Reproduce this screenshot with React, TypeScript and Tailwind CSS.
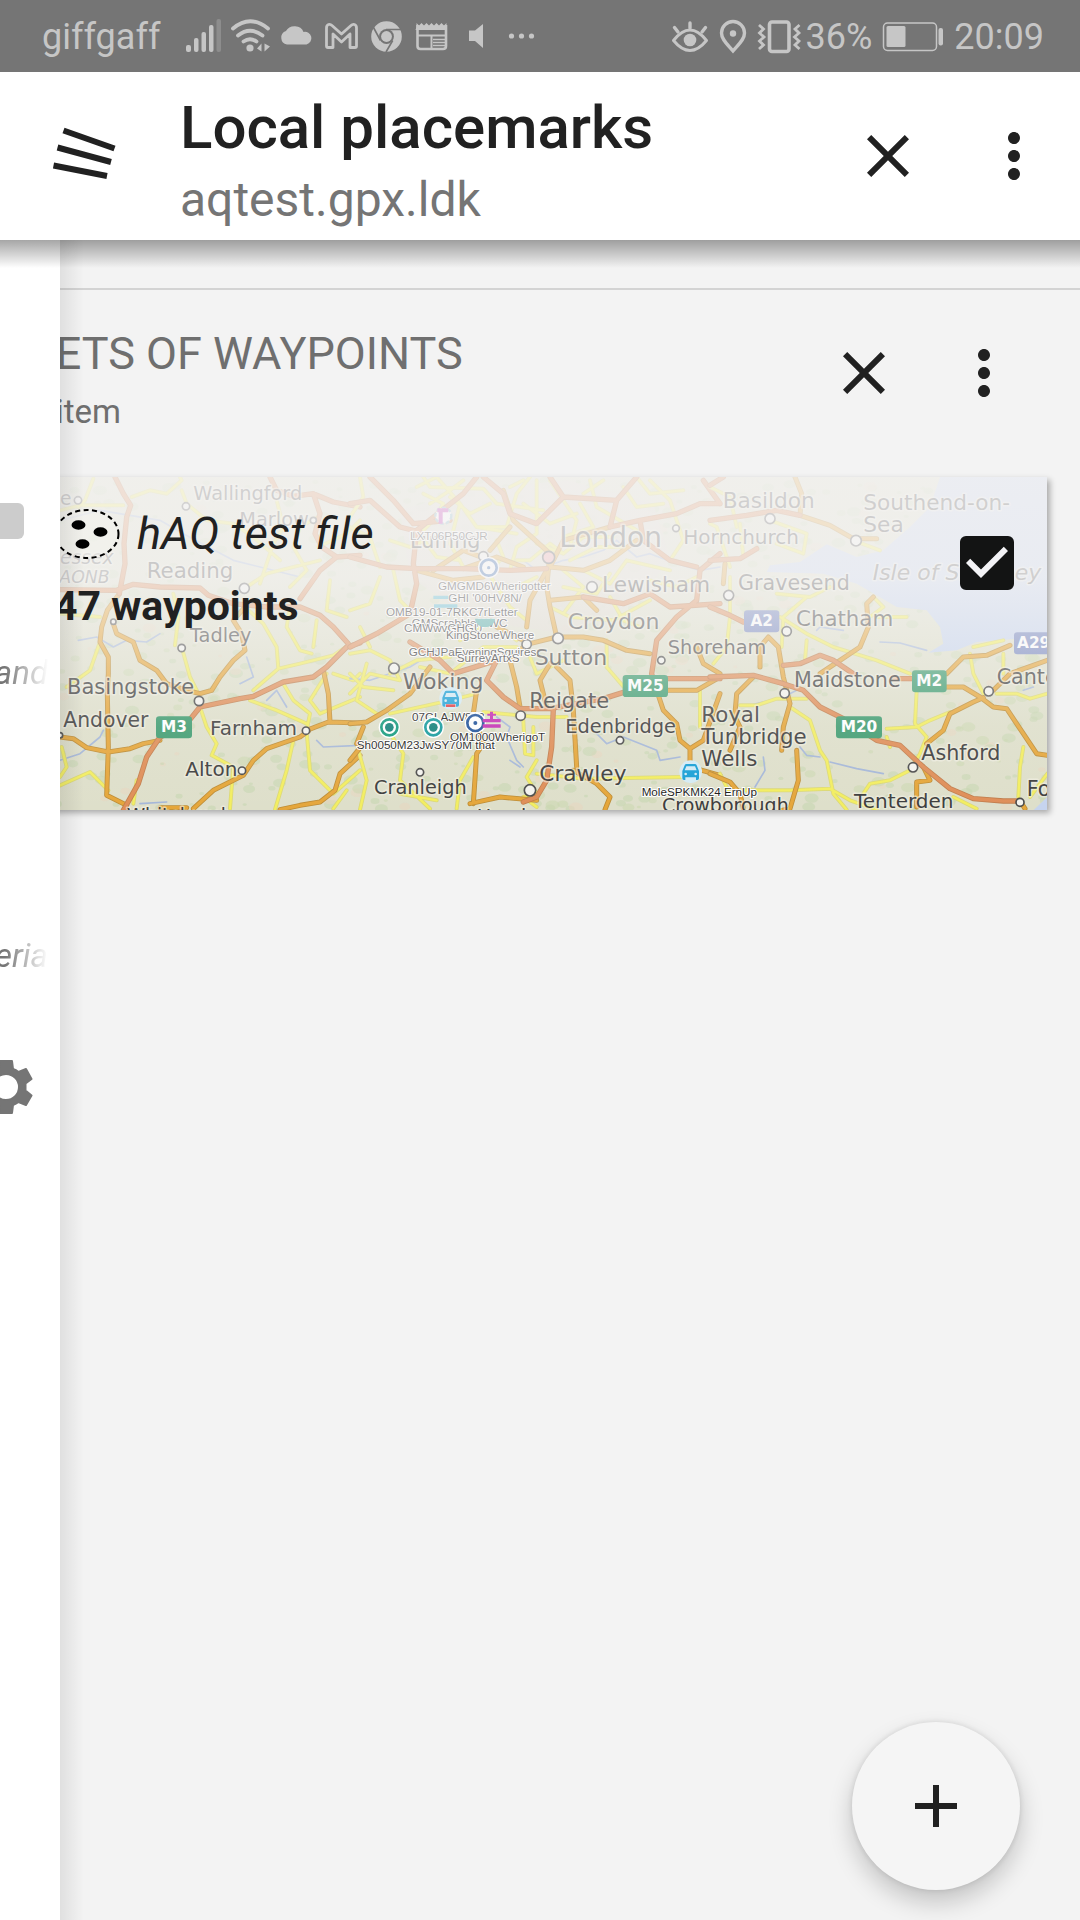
import React, { useState } from 'react';

const CloseIcon = () => (
  <svg className="h-18 w-18" viewBox="0 0 24 24" fill="currentColor">
    <path d="M19 6.41L17.59 5 12 10.59 6.41 5 5 6.41 10.59 12 5 17.59 6.41 19 12 13.41 17.59 19 19 17.59 13.41 12z" />
  </svg>
);

const MoreIcon = () => (
  <svg className="h-18 w-18" viewBox="0 0 24 24" fill="currentColor">
    <path d="M12 8c1.1 0 2-.9 2-2s-.9-2-2-2-2 .9-2 2 .9 2 2 2zm0 2c-1.1 0-2 .9-2 2s.9 2 2 2 2-.9 2-2-.9-2-2-2zm0 6c-1.1 0-2 .9-2 2s.9 2 2 2 2-.9 2-2-.9-2-2-2z" />
  </svg>
);

const StatusBar = () => (
  <div className="flex h-18 items-center justify-between bg-[#757575] pl-[42px] pr-9 text-4xl text-[#c6c6c6]">
    <div className="flex items-center">
      <span className="mr-6 pt-0.5">giffgaff</span>
      {/* signal */}
      <svg className="h-9 w-[45px]" viewBox="185 18 45 36" fill="currentColor">
        <rect x="187" y="45" width="5" height="7" rx="2" />
        <rect x="195" y="38" width="4.5" height="14" rx="2" />
        <rect x="202.5" y="32" width="4.5" height="20" rx="2" />
        <rect x="210" y="25" width="4.5" height="27" rx="2" />
        <rect x="217.5" y="19" width="4.5" height="33" rx="2" opacity="0.3" />
      </svg>
      {/* wifi */}
      <svg className="h-9 w-[45px]" viewBox="230 18 45 36" fill="none" stroke="currentColor" strokeWidth="3.8" strokeLinecap="round">
        <path d="M234 28.5Q251 14 269 28.5M239 35.500Q251 26 263.500 35.500M244.500 41.500Q251 37 257.500 41.500" />
        <circle cx="251" cy="48" r="3.6" fill="currentColor" stroke="none" />
        <path d="M262.500 43.500V51.500L258 48.500ZM265.500 43.500V51.500L271 46.500Z" fill="currentColor" stroke="none" />
      </svg>
      {/* cloud */}
      <svg className="h-9 w-[45px]" viewBox="275 18 45 36" fill="currentColor">
        <path d="M288 44.500a7 7 0 0 1-1-13.500a9.500 8.500 0 0 1 17.500 1a6.200 6.200 0 0 1 3 12.500z" />
      </svg>
      {/* mail */}
      <svg className="h-9 w-[45px]" viewBox="320 18 45 36" fill="none" stroke="currentColor" strokeWidth="2.8" strokeLinejoin="round">
        <path d="M327.500 28c0-4 3.500-4.500 5.500-2.500l9.500 8.500 9.500-8.500c2-2 5.500-1.500 5.500 2.500v18q0 1.500-1.500 1.500h-5V34l-8.500 8-8.500-8v13.500h-5q-1.500 0-1.500-1.500z" />
      </svg>
      {/* browser */}
      <svg className="h-9 w-[45px]" viewBox="365 18 45 36">
        <circle cx="387.500" cy="36.500" r="15.300" fill="currentColor" />
        <circle cx="387.500" cy="36.500" r="7.400" fill="#757575" />
        <circle cx="387.500" cy="36.500" r="5.400" fill="currentColor" />
        <path d="M387 29.500h15M381.500 40.500L374.500 27.500M393.700 40.500L387 52" stroke="#757575" strokeWidth="1.600" />
      </svg>
      {/* news */}
      <svg className="h-9 w-[45px]" viewBox="410 18 45 36" fill="none" stroke="currentColor">
        <path d="M418.500 25V46q0 3 3 3H444q3 0 3-3V25" strokeWidth="2.600" />
        <path d="M417.500 27V23l2.500 2.500 2.500-2.500 2.500 2.500 2.500-2.500 2.500 2.500 2.500-2.500 2.500 2.500 2.500-2.500 2.500 2.500 2.500-2.500 2.500 2.500 2.500-2.500v7h-31z" fill="currentColor" stroke="none" />
        <path d="M418 35.500H447M432.500 35V49" strokeWidth="2" />
        <path d="M434 39.500H446M434 42.500H446M434 45.500H446" strokeWidth="1.400" />
      </svg>
      {/* muted speaker */}
      <svg className="h-9 w-[45px]" viewBox="455 18 45 36" fill="currentColor">
        <path d="M470 30.500h6l8-6.500v24l-8-7h-6z" />
      </svg>
      <svg className="h-9 w-[45px]" viewBox="500 18 45 36" fill="currentColor">
        <circle cx="512.500" cy="36" r="2.600" />
        <circle cx="522.500" cy="36" r="2.600" />
        <circle cx="532.500" cy="36" r="2.600" />
      </svg>
    </div>
    <div className="flex items-center">
      <svg className="h-9 w-12" viewBox="668 18 48 36" fill="none" stroke="currentColor" strokeWidth="3.400" strokeLinecap="round">
        <path d="M675.500 40.500Q692 19.500 708.500 40.500Q692 60.500 675.500 40.500Z" strokeWidth="3" strokeLinejoin="round" />
        <path d="M692 23V28M676.500 27.500L680 32M707.500 27.500L704 32" />
        <circle cx="692" cy="40" r="6.300" fill="currentColor" stroke="none" />
      </svg>
      <svg className="h-9 w-[38px]" viewBox="716 18 38 36" fill="none" stroke="currentColor" strokeWidth="3.400">
        <path d="M735 51C729 44 723.500 39.500 723.500 33a11.500 11.500 0 0 1 23 0C746.500 39.500 741 44 735 51Z" />
        <circle cx="735" cy="33.500" r="3.200" fill="currentColor" stroke="none" />
      </svg>
      <svg className="h-9 w-[54px]" viewBox="754 18 54 36" fill="none" stroke="currentColor">
        <rect x="771.500" y="22" width="19.500" height="29.500" rx="2.500" strokeWidth="3.600" />
        <path d="M761 25l4.500 4-4 4 4.500 4-4.500 4 4 4-4.500 4M801.500 25l-4.500 4 4 4-4.500 4 4.500 4-4 4 4.500 4" strokeWidth="2.800" />
      </svg>
      <span className="pt-0.5">36%</span>
      <svg className="mx-2 h-9 w-[66px]" viewBox="881 18 66 36">
        <rect x="884.500" y="23" width="53" height="27.500" rx="4" fill="none" stroke="currentColor" strokeWidth="1.500" />
        <rect x="887.500" y="26" width="19" height="21" rx="1.500" fill="currentColor" />
        <rect x="939.500" y="28" width="4.500" height="17.500" rx="2" fill="currentColor" />
      </svg>
      <span className="pt-0.5">20:09</span>
    </div>
  </div>
);

const Header = () => (
  <header className="relative z-20 flex h-[168px] items-start bg-white text-[#212121]">
    <button type="button" aria-label="Menu" className="ml-12 mt-12 h-18 w-18">
      <svg className="h-18 w-18" viewBox="48 120 72 72" fill="none" stroke="currentColor" strokeWidth="6">
        <path d="M63.500 130.500L114.500 148.500M57.500 147.500L111 162M53.500 165.500L107 176" />
      </svg>
    </button>
    <div className="ml-15 mt-5 min-w-0 flex-1">
      <h1 className="text-6xl font-medium leading-[72px]">Local placemarks</h1>
      <p className="text-5xl leading-[72px] text-[#757575]">aqtest.gpx.ldk</p>
    </div>
    <button type="button" aria-label="Close" className="mr-[54px] mt-12 h-18 w-18"><CloseIcon /></button>
    <button type="button" aria-label="More options" className="mr-[30px] mt-12 h-18 w-18"><MoreIcon /></button>
    <div className="absolute inset-x-0 top-full h-7 bg-linear-to-b from-black/35 to-transparent" />
  </header>
);

const GearIcon = () => (
  <svg className="h-[54px] w-[54px]" viewBox="-21 1060 54 54" fill="#757575">
    <path
      fillRule="evenodd"
      stroke="#757575"
      strokeWidth="2"
      strokeLinejoin="round"
      d="M0 1061H12L13 1069Q16 1070 18.500 1072L26 1069L31.500 1079L25.500 1083.500V1090.500L31.500 1095.500L26 1105L18.500 1102Q16 1104 13 1105L12 1113H0L-1 1105Q-4 1104 -6.500 1102L-14 1105L-19.500 1095.500L-13.500 1090.500V1083.500L-19.500 1079L-14 1069L-6.500 1072Q-4 1070 -1 1069ZM6 1074a13 13 0 1 0 0 26a13 13 0 1 0 0-26Z"
    />
  </svg>
);

const Drawer = () => (
  <aside className="absolute inset-y-0 left-0 z-10 w-15 bg-white text-[33px] italic leading-10 text-[#757575]">
    <div className="flex h-full flex-col overflow-hidden pt-[263px]">
      <div className="h-9 w-6 rounded-r-md bg-[#cccccc]" />
      <div className="mt-[114px] flex w-12 justify-end overflow-hidden mask-r-from-10% mask-r-to-100%">
        <span>and</span>
      </div>
      <div className="mt-[243px] flex w-12 justify-end overflow-hidden mask-r-from-10% mask-r-to-100%">
        <span>eria</span>
      </div>
      <button type="button" aria-label="Settings" className="-ml-[21px] mt-[84px] w-[54px]"><GearIcon /></button>
    </div>
    <div className="absolute inset-y-0 left-full w-6 bg-linear-to-r from-black/8 to-transparent" />
  </aside>
);

type Tile = {
  x: number;
  motorways: string[];
  primary: string[];
  secondary: string[];
  rivers: string[];
};

const tiles: Tile[] = [
  {
    x: 0,
    motorways: [
      'M180 388L350 390L400 372L480 380L600 383L625 405L700 430L800 440L900 440L960 465L1000 500L1045 550',
      'M370 1050L415 970L440 890L480 830L560 790L600 740L720 715L760 708L850 665L940 650L980 620L1040 560L1080 548',
      'M810 50L830 90L880 108L940 100L1000 125L1080 140',
      'M900 415L960 330L1010 290L1080 285M940 100L960 160L945 220L965 260L1010 290',
      'M345 50L370 100L392 135L380 170L372 250L375 310L358 400',
    ],
    primary: [
      'M358 400L322 450L305 500L300 545L325 590L325 640L322 700L325 860L320 1005L380 1035',
      'M180 830L220 835L260 862L325 875L390 865L430 850L480 840',
      'M340 490L350 520L400 545L420 600L470 630L500 670L560 690L600 700',
      'M600 700L635 690L660 650L700 600L735 570L725 520L700 480L735 440',
      'M970 630L985 700L990 785M920 810L985 785L1080 788',
      'M580 1045L640 990L730 945L760 900L800 865L900 830L925 812',
      'M840 1048L900 1035L960 1025L1005 990L1020 940L1080 885',
      'M480 1042L560 1042',
    ],
    secondary: [
      'M280 55L255 120L235 140M180 150L240 135L370 135',
      'M395 110L450 90L500 100L545 60L540 50M545 90L560 130L620 180L700 190L760 230L840 300',
      'M520 400L535 470L525 555M545 560L570 650L595 700',
      'M300 545L270 630L200 680M185 860L200 920L180 950M180 975L270 935L325 990',
      'M400 1030L410 960M600 740L620 800L650 850L635 885L700 920L690 1045',
      'M735 440L790 490L830 560L835 625L760 690M835 625L900 610L1000 585L1045 555',
      'M850 670L880 720L930 760L920 810M750 720L830 750L920 790M980 640L930 720L960 760L1080 710',
      'M880 840L860 930L825 1048M920 815L930 930L1000 1000L1080 930M1000 1045L1040 990',
      'M990 360L980 450L1040 470M870 440L860 500L900 570L935 580M950 480L940 560',
      'M955 170L900 200L880 260L920 330L870 380M955 260L1040 220L1080 180',
      'M180 460L300 470M740 380L800 340L960 300',
      'M830 120L850 200L820 250L780 370M1000 640L1060 660L1080 640',
    ],
    rivers: [
      'M235 540L290 530L340 560L380 540L440 545L480 520M180 900L240 880L300 830L310 810',
      'M740 590L760 650L720 670M950 840L970 860L1080 855M800 720L830 690L860 740',
      'M180 180L300 150L480 180L550 220L700 300L900 350M420 1030L500 1025',
    ],
  },
  {
    x: 1050,
    motorways: [
      'M0 130L60 120L150 200L210 215M60 50L130 120L190 190L300 180',
      'M0 290L110 320L200 325L340 325L480 330L590 325',
      'M0 560L80 520L180 460L200 370L190 310L200 210L340 100L380 50',
      'M400 50L460 100L480 160L560 190L640 110L800 120L860 50M640 110L600 50',
      'M1110 130L1060 60M800 120L780 200L870 180L980 160L1050 130L1110 130',
      'M1110 280L1050 330L1040 420L980 470L920 540L905 640L920 700',
      'M180 545L270 600L310 640L440 600L410 660L460 710L510 745L600 745L760 715L840 690L950 655L1110 655',
      'M610 745L605 860L590 960L560 1010L520 1025',
      'M870 180L880 240L960 300L1040 320M700 410L820 430L900 400L960 440L1110 430',
    ],
    primary: [
      'M0 790L50 785L110 750L180 700L240 620M20 850L40 800',
      'M370 1030L380 880L400 850L370 760L380 690',
      'M460 90L490 180L600 280L590 380L600 440L620 530L540 550L440 500',
      'M600 320L700 330L780 300L860 240M600 320L640 240L780 200M590 330L540 420L530 500',
      'M620 530L700 530L760 540L830 570L900 580M600 420L700 410L740 450',
      'M530 550L480 600L500 680L510 740M600 610L570 660L590 740M620 620L660 660L670 750L680 920',
      'M360 1030L450 1010L560 1020M670 930L740 970L780 1010L765 1048',
      'M920 690L940 750L980 790L990 840L1020 865L1060 840L1110 700M1020 865L1020 920L1110 945',
      'M950 690L1040 690L1110 650M0 900L40 850M1040 560L1060 610L1110 640',
      'M340 325L440 290L520 320M250 330L340 270L420 300M480 200L420 270M200 330L310 360L400 350',
    ],
    secondary: [
      'M200 80L260 50L330 130L380 200L470 200L500 100L540 50M220 100L280 130L250 180L200 230',
      'M0 580L60 570L120 600L150 660L60 640L0 700M0 640L40 680L130 690',
      'M50 610L20 720L80 760M60 560L30 500M0 450L60 430L90 350M90 320L60 230L0 200',
      'M130 330L150 420L180 450M330 130L300 250L340 320M410 330L480 440L530 480',
      'M480 330L500 260L560 220L560 60M560 250L640 280L700 230L790 230M640 330L700 380L640 460',
      'M690 130L730 200L640 230M600 440L660 470L790 480L900 420M770 540L770 620L830 690',
      'M700 330L780 370L830 300L960 330M870 500L820 480L780 410M540 590L560 640L640 600',
      'M120 760L300 720L380 700M400 755L560 770L650 770M520 780L525 880L550 885L550 800',
      'M120 820L160 880L150 960L240 1045M370 890L330 960L320 1045M20 850L50 960L30 1048',
      'M560 900L530 950L560 1000L520 1010L560 1040M560 940L700 955L1000 950',
      'M1050 690L1050 800M860 50L900 100L1000 90M900 60L960 120L1000 240L960 300',
      'M220 50L240 80L400 85L440 130L580 150M380 200L500 220M200 210L260 290L330 300',
      'M210 620L300 640L400 560L500 560M120 640L200 600L300 590M330 540L420 480L500 540',
      'M600 60L680 180L660 260M720 60L740 140L860 210M640 280L600 250L540 300L500 300',
      'M150 1000L260 1020M900 360L980 380L1040 350',
      'M30 50L40 110L0 170M250 230L180 260L120 240M420 130L360 160L300 110M520 130L600 190L680 160',
      'M440 240L460 290L420 330M660 300L740 260L820 260M560 350L500 380L440 370M640 380L740 400L780 340',
      'M760 60L700 100M820 80L860 140L940 130M520 60L480 80M340 60L300 90L240 130',
    ],
    rivers: [
      'M440 770L480 800L470 830L500 900L520 920M720 800L770 850L820 830L920 870L930 900L990 890',
      'M0 655L60 660L180 620L260 570M800 240L860 290L900 280L980 310L1050 330L1110 320',
      'M520 300L560 330L640 300L700 290L760 270L800 240M480 900L510 920',
    ],
  },
  {
    x: 2130,
    motorways: [
      'M0 440L60 465L100 485M0 650L130 645L220 670L280 690L330 740L400 775L500 840L570 855L640 920L720 985L790 1015L880 1022L930 1022',
      'M220 615L270 610L330 585L370 600L430 640M550 655L610 655',
      'M0 180L110 165L200 150L270 165M0 75L40 50M0 300L90 295L140 265',
    ],
    primary: [
      'M255 50L275 100L270 165L360 195L430 235L500 235',
      'M150 620L150 560L175 530L205 560L220 650L240 730L220 800L215 870',
      'M330 640L390 600L450 560L475 500L470 430L490 410',
      'M700 680L760 680L810 710L850 740L890 745L940 820L980 880L1012 885',
      'M710 640L760 590L830 585L900 555M850 690L900 640L1012 600',
      'M650 850L700 810L720 760L790 725L820 712M620 1040L620 965L660 960L640 920',
      'M0 940L60 965L90 1000L100 1045M260 870L265 960L240 1045L215 1050M130 650L80 700L75 760',
      'M930 1022L945 1045M60 870L90 800L70 760M40 370L45 310',
    ],
    secondary: [
      'M60 350L60 470L50 560L10 610M210 470L290 520L370 560L500 600L600 640M215 560L220 470L290 410',
      'M620 690L615 790L650 830L630 880L600 930L540 960L480 970L460 1000',
      'M530 805L620 800L660 780L720 755M530 830L540 860M240 740L300 780L330 870L350 900L370 1000L410 1048',
      'M90 735L140 735L200 715L290 715M90 990L240 990L360 985L420 1020L500 1048',
      'M780 580L790 640L820 700M790 560L880 540M880 580L880 640M860 700L920 700L960 715L1012 700',
      'M940 860L930 920L925 1010M730 1010L800 1045M290 540L285 600M500 470L590 470M490 410L520 440L480 470',
      'M200 250L280 280L290 220L180 180M430 240L510 270M0 80L60 110L80 200M60 320L20 200L0 190',
      'M90 190L100 290M200 400L300 410L360 380M960 1010L1012 940M30 940L60 1000',
    ],
    rivers: [
      'M270 860L290 885L330 890M360 905L440 925L520 940M510 545L570 548L650 570M135 980L165 930L160 890',
      'M320 510L330 500L400 510M120 735L220 710L260 690M940 690L970 680',
    ],
  },
];

const Road = ({ d, tone }: { d: string[]; tone: string }) => {
  const path = d.join('');
  const styles: Record<string, [string, string, number]> = {
    motorway: ['#c17d4c', '#df8e58', 13],
    primary: ['#bd8c35', '#e5a63a', 12],
    secondary: ['#dbd876', '#f3ee60', 9],
  };
  const [casing, fill, width] = styles[tone];
  return (
    <>
      <path d={path} stroke={casing} strokeWidth={width + 3} />
      <path d={path} stroke={fill} strokeWidth={width - 2} />
    </>
  );
};

// [text, x, baseline, size, italic]
const places: [string, number, number, number, boolean?][] = [
  ['e', 180, 134, 56],
  ['Wallingford', 580, 120, 58],
  ['Marlow', 718, 197, 58],
  ['Reading', 440, 354, 64],
  ['essex', 180, 310, 56, true],
  ['AONB', 178, 368, 52, true],
  ['Tadley', 570, 546, 58],
  ['Basingstoke', 201, 702, 63],
  ['Andover', 190, 800, 61],
  ['Farnham', 630, 824, 60],
  ['Alton', 556, 946, 60],
  ['Whitchurch', 380, 1085, 56],
  ['Luffing', 1230, 262, 62],
  ['London', 1678, 260, 84],
  ['Hornchurch', 2050, 252, 60],
  ['Lewisham', 1806, 394, 65],
  ['Croydon', 1703, 507, 66],
  ['Sutton', 1604, 614, 66],
  ['Woking', 1208, 686, 66],
  ['Reigate', 1588, 743, 63],
  ['Shoreham', 2003, 582, 58],
  ['Edenbridge', 1696, 818, 58],
  ['Crawley', 1618, 962, 65],
  ['Cranleigh', 1122, 1000, 58],
  ['Horsham', 1430, 1088, 58],
  ['Basildon', 2168, 144, 65],
  ['Southend-on-', 2590, 148, 65],
  ['Sea', 2590, 214, 65],
  ['Gravesend', 2214, 388, 62],
  ['Isle of Sheppey', 2618, 358, 66, true],
  ['Chatham', 2388, 496, 64],
  ['Maidstone', 2382, 680, 62],
  ['Canterbury', 2990, 672, 62],
  ['Royal', 2104, 784, 64],
  ['Tunbridge', 2104, 850, 64],
  ['Wells', 2104, 916, 64],
  ['Ashford', 2764, 900, 62],
  ['Tenterden', 2562, 1043, 60],
  ['Folkestone', 3080, 1007, 62],
  ['Crowborough', 1986, 1056, 57],
];

const towns = [
  [234, 120, 11], [558, 138, 11], [733, 384, 15], [340, 484, 8], [545, 563, 11], [597, 722, 14], [180, 825, 8],
  [918, 811, 11], [726, 931, 11], [940, 180, 9], [1182, 624, 16], [1450, 288, 14], [1580, 552, 14], [1674, 534, 16],
  [1776, 380, 16], [2028, 204, 10], [1562, 766, 14], [1860, 840, 11], [1260, 936, 11], [1590, 990, 17], [1984, 600, 11],
  [2310, 175, 15], [2568, 241, 16], [2186, 405, 15], [2360, 513, 14], [2354, 699, 14], [2966, 693, 14], [2739, 921, 14],
  [3060, 1026, 12],
];

const shields: [string, number, number, number, string][] = [
  ['M3', 468, 768, 108, '#3f9c70'],
  ['M25', 1868, 644, 136, '#3f9c70'],
  ['M2', 2736, 630, 104, '#3f9c70'],
  ['M20', 2508, 768, 138, '#3f9c70'],
  ['A2', 2232, 450, 106, '#7283bd'],
  ['A299', 3042, 516, 150, '#7283bd'],
];

const waypoints: [string, number, number][] = [
  ['LXT06P50CJR', 1230, 238],
  ['GMGMD6Wherigotter', 1314, 389],
  ["GHI '00HV8N/", 1345, 426],
  ['OMB19-01-7RKC7rLetter', 1158, 466],
  ['GMScrabble/CWC', 1235, 499],
  ['CMWwvGHGU', 1212, 515],
  ['KingStoneWhere', 1338, 537],
  ['GCHJPaEveningSquires', 1226, 587],
  ['SurreyArtxS', 1370, 606],
  ['07GLAJW878', 1236, 783],
  ['Sh0050M23JwSY70M that', 1070, 867],
  ['OM1000WherigoT', 1350, 843],
  ['MoleSPKMK24 ErnUp', 1925, 1006],
];

const blobs = Array.from({ length: 900 }, (_, i) => {
  const n = Math.abs(Math.sin(i * 12.9898) * 43758.5453) % 1;
  const m = Math.abs(Math.sin(i * 78.233 + 4) * 24634.6345) % 1;
  return {
    x: 100 + n * 3040,
    y: 60 + m * 985,
    r: 4 + ((i * 37) % 11),
    fill: i % 7 === 0 ? '#e8d6c0' : i % 3 === 0 ? '#cbd7ae' : '#c4d6ae',
  };
});

const Target = ({ x, y, color, core, dot }: { x: number; y: number; color: string; core: string; dot: number }) => (
  <g>
    <circle cx={x} cy={y} r="32" fill="#fff" />
    <circle cx={x} cy={y} r="24" fill="none" stroke={color} strokeWidth="8" />
    <circle cx={x} cy={y} r={dot} fill={core} />
  </g>
);

const CarPin = ({ x, y }: { x: number; y: number }) => (
  <g>
    <circle cx={x} cy={y} r="34" fill="#d3ebf5" />
    <path
      transform={`translate(${x - 26} ${y - 26})`}
      fill="#189fd6"
      d="M8 7Q9 3 14 3H38Q43 3 44 7L51 24V46Q51 51 46 51H42V43H10V51H6Q1 51 1 46V24ZM13 10L8 22H44L39 10ZM11 29a4 4 0 1 0 0 8a4 4 0 1 0 0-8ZM41 29a4 4 0 1 0 0 8a4 4 0 1 0 0-8Z"
      fillRule="evenodd"
    />
  </g>
);

const MapPreview = () => (
  <svg
    className="block h-[333px] w-full"
    viewBox="99 50 3042 1000"
    preserveAspectRatio="xMaxYMin slice"
    fontFamily="'DejaVu Sans', sans-serif"
    aria-hidden="true"
  >
    <defs>
      <linearGradient id="veil" x1="0" y1="0" x2="0" y2="1">
        <stop offset="0" stopColor="#f4f3f3" stopOpacity="0.82" />
        <stop offset="0.3" stopColor="#f4f3f3" stopOpacity="0.76" />
        <stop offset="0.5" stopColor="#f4f3f3" stopOpacity="0.5" />
        <stop offset="0.75" stopColor="#f4f3f3" stopOpacity="0.14" />
        <stop offset="1" stopColor="#f4f3f3" stopOpacity="0" />
      </linearGradient>
    </defs>
    <rect x="99" y="50" width="3042" height="1000" fill="#dedfca" />
    {blobs.map((b, i) => (
      <ellipse key={i} cx={b.x} cy={b.y} rx={b.r * 1.5} ry={b.r} fill={b.fill} opacity="0.55" />
    ))}
    <path d="M1200 150L1400 90L1700 60L1960 130L2010 300L1900 430L1700 520L1420 480L1230 350Z" fill="#dfd9cf" opacity="0.7" />
    <g fill="#c6d4ee">
      <path d="M2820 50H3142V545L3050 535L2930 545L2870 570L2785 577L2830 550L2820 500L2780 450L2690 440L2630 405L2570 370L2470 340L2300 335L2310 315L2400 305L2480 252L2570 290L2650 270L2730 200L2790 140Z" />
      <path d="M3142 1010L3100 1050H3142Z" />
    </g>
    <g fill="none" strokeLinejoin="round" strokeLinecap="round">
      {tiles.map((t) => (
        <g key={t.x} transform={`translate(${t.x} 0)`}>
          <path d={t.rivers.join('')} stroke="#a5b7d8" strokeWidth="5" />
          <Road d={t.secondary} tone="secondary" />
          <Road d={t.primary} tone="primary" />
          <Road d={t.motorways} tone="motorway" />
        </g>
      ))}
    </g>
    {towns.map(([x, y, r]) => (
      <circle key={`${x}-${y}`} cx={x} cy={y} r={r} fill="#f3f3ee" stroke="#4b4b4b" strokeWidth="5" />
    ))}
    <circle cx="1646" cy="291" r="18" fill="#f0a5aa" stroke="#4b4b4b" strokeWidth="5" />
    {places.map(([text, x, y, size, italic]) => (
      <text
        key={text + x}
        x={x}
        y={y}
        fontSize={size}
        fontStyle={italic ? 'italic' : 'normal'}
        fill={italic ? '#5f5f5f' : '#3d3d3d'}
        stroke="#f3f1e6"
        strokeOpacity="0.6"
        strokeWidth="9"
        strokeLinejoin="round"
        paintOrder="stroke"
      >
        {text}
      </text>
    ))}
    {shields.map(([text, x, y, w, color]) => (
      <g key={text}>
        <rect x={x} y={y} width={w} height="66" rx="10" fill={color} />
        <text x={x + w / 2} y={y + 48} fontSize="46" fontWeight="bold" textAnchor="middle" fill="#fff">
          {text}
        </text>
      </g>
    ))}
    <g fontFamily="'Liberation Sans', sans-serif" fontSize="35" fill="#1c1c1c" stroke="#fff" strokeWidth="6" paintOrder="stroke">
      {waypoints.map(([text, x, y]) => (
        <text key={text} x={x} y={y}>{text}</text>
      ))}
    </g>
    <circle cx="1330" cy="166" r="24" fill="#fff" stroke="#86b9c9" strokeWidth="7" strokeDasharray="12 6" />
    <path d="M1322 190V146M1312 150H1345" stroke="#c42bb3" strokeWidth="12" />
    <Target x={1466} y={322} color="#1e57a8" core="#1e57a8" dot={5} />
    <Target x={1426} y={788} color="#1d4f98" core="#1d4f98" dot={6} />
    <Target x={1168} y={801} color="#129a7c" core="#0f7f77" dot={13} />
    <Target x={1300} y={801} color="#129a9c" core="#0f7f77" dot={13} />
    <path d="M1300 406h45v10h-45zM1302 432h70v10h-70z" fill="#56b8cf" />
    <path d="M1425 475h60a30 26 0 0 1-60 0z" fill="#4ba9a4" />
    <CarPin x={1352} y={714} />
    <path d="M1338 732h28v8h-28z" fill="#e0393e" />
    <CarPin x={2072} y={934} />
    <path d="M1448 776h54v10h-54zM1448 792h54v10h-54zM1470 754h9v24h-9zM1462 760h26v6h-26z" fill="#c42bb3" />
    <rect x="99" y="50" width="3042" height="1000" fill="url(#veil)" />
  </svg>
);

const WaypointCard = () => {
  const [checked, setChecked] = useState(true);

  return (
    <article className="relative shadow-[3px_3px_6px_rgba(0,0,0,0.3)]">
      <MapPreview />
      <div className="absolute inset-0 flex items-start justify-between pl-[18px] pr-[33px] text-[#212121]">
        <div className="pt-7">
          <div className="flex items-center">
            <svg className="mr-[14px] h-[58px] w-18" viewBox="52 503 72 58">
              <ellipse cx="88" cy="532" rx="31.500" ry="24" fill="#f5f5f0" fillOpacity="0.4" stroke="#000" strokeWidth="2" strokeDasharray="5 3.500" />
              <ellipse cx="79.500" cy="523" rx="7" ry="4.700" />
              <ellipse cx="101.500" cy="530" rx="7" ry="4.700" />
              <ellipse cx="83.500" cy="542" rx="7" ry="4.700" />
            </svg>
            <h3 className="text-[45px] italic leading-[58px]">hAQ test file</h3>
          </div>
          <p className="mt-[19px] pl-[3px] text-[41px] font-bold leading-[48px]">47 waypoints</p>
        </div>
        <label className="relative mt-[59px] h-[54px] w-[54px]">
          <input
            type="checkbox"
            aria-label="Show hAQ test file"
            checked={checked}
            onChange={(e) => setChecked(e.target.checked)}
            className="block h-[54px] w-[54px] appearance-none rounded-md border-6 border-[#131414] checked:bg-[#131414]"
          />
          {checked && (
            <svg className="pointer-events-none absolute inset-0 h-[54px] w-[54px]" viewBox="3 3 18 18" fill="#f3f3f6">
              <path d="M10 17l-5-5 1.410-1.410L10 14.170l7.590-7.590L19 8l-9 9z" />
            </svg>
          )}
        </label>
      </div>
    </article>
  );
};

const App: React.FC = () => {
  return (
    <div className="flex min-h-screen flex-col bg-[#f3f3f3] font-['Roboto',sans-serif]">
      <StatusBar />
      <Header />
      <div className="relative flex-1">
        <Drawer />
        <main className="pt-12">
          <section className="border-t-2 border-[#d3d3d3] px-[33px]">
            <div className="-ml-1 flex items-start justify-between pr-[27px] pt-[37px] text-[#6f6f6f]">
              <div>
                <h2 className="text-[45px] leading-[54px]">SETS OF WAYPOINTS</h2>
                <p className="mt-[9px] text-[33px] leading-[44px]">1 item</p>
              </div>
              <div className="mt-[10px] flex gap-12 text-[#212121]">
                <button type="button" aria-label="Remove set" className="h-18 w-18"><CloseIcon /></button>
                <button type="button" aria-label="Set options" className="h-18 w-18"><MoreIcon /></button>
              </div>
            </div>
            <div className="mt-[43px]">
              <WaypointCard />
            </div>
          </section>
        </main>
      </div>
      <button
        type="button"
        aria-label="Add"
        className="fixed bottom-[30px] right-15 z-20 flex h-42 w-42 items-center justify-center rounded-full bg-[#f5f5f5] text-[#212121] shadow-[0_12px_24px_rgba(0,0,0,0.2),0_0_6px_rgba(0,0,0,0.12)]"
      >
        <svg className="h-18 w-18" viewBox="0 0 24 24" fill="currentColor">
          <path d="M19 13h-6v6h-2v-6H5v-2h6V5h2v6h6v2z" />
        </svg>
      </button>
    </div>
  );
};

export default App;
